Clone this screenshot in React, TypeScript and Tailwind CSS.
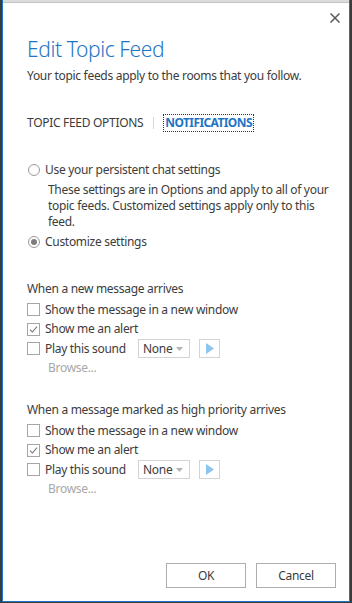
const font = { fontFamily: '"Noto Sans", "Open Sans", sans-serif' };

function Checkbox({ checked }: { checked?: boolean }) {
  return (
    <span className="flex h-[13px] w-[13px] shrink-0 items-center justify-center border border-[#a6a6a6] bg-white">
      {checked && (
        <svg width="9" height="9" viewBox="0 0 9 9" fill="none">
          <path d="M1 4.6L3.4 7L8 1.6" stroke="#7a7a7a" strokeWidth="1.1" />
        </svg>
      )}
    </span>
  );
}

function Radio({ checked }: { checked?: boolean }) {
  return (
    <span className="flex h-[12px] w-[12px] shrink-0 items-center justify-center rounded-full border border-[#9a9a9a] bg-white">
      {checked && <span className="h-[6px] w-[6px] rounded-full bg-[#7d7d7d]" />}
    </span>
  );
}

function Group({ title }: { title: string }) {
  return (
    <div className="flex flex-col">
      <div className="h-[16px] leading-[16px]">{title}</div>
      <div className="mt-[3px] flex h-[19px] items-center gap-[5px]">
        <Checkbox />
        <span>Show the message in a new window</span>
      </div>
      <div className="flex h-[20px] items-center gap-[5px]">
        <Checkbox checked />
        <span>Show me an alert</span>
      </div>
      <div className="flex h-[19px] items-center gap-[5px]">
        <Checkbox />
        <span className="w-[88px]">Play this sound</span>
        <div className="flex h-[19px] w-[52px] items-center justify-between border border-[#d4d4d4] pl-[4px] pr-[6px]">
          <span>None</span>
          <svg width="7" height="4" viewBox="0 0 7 4">
            <path d="M0 0H7L3.5 4Z" fill="#b3b3b3" />
          </svg>
        </div>
        <div className="ml-[4px] flex h-[19px] w-[21px] items-center justify-center border border-[#d4d4d4]">
          <svg width="8" height="11" viewBox="0 0 8 11">
            <path d="M0 0L8 5.5L0 11Z" fill="#8ec5ee" />
          </svg>
        </div>
      </div>
      <div className="flex h-[19px] items-center pl-[21px] text-[#a8a8a8]">Browse...</div>
    </div>
  );
}

export default function App() {
  return (
    <div className="h-[603px] w-[352px] bg-[#3b3b3b] text-[12px] tracking-[-0.3px] text-[#3c3c3c]" style={font}>
      <div className="ml-[2px] flex h-[602px] w-[348px] flex-col border-x border-b border-[#1b76c8] bg-white">
        {/* window chrome strip */}
        <div className="h-[3px] border-b border-[#c4c4c4] bg-[#dcdcdc]" />

        {/* close */}
        <div className="flex h-[31px] justify-end pr-[9px] pt-[10px]">
          <svg width="10" height="10" viewBox="0 0 10 10">
            <path d="M0.5 0.5L9.5 9.5M9.5 0.5L0.5 9.5" stroke="#5a5a5a" strokeWidth="1.5" />
          </svg>
        </div>

        <div className="flex flex-1 flex-col pl-[24px]">
          <h1 className="h-[30px] text-[21px] font-light leading-[30px] tracking-[-0.4px] text-[#1e75c6]">Edit Topic Feed</h1>
          <p className="mt-[4px] h-[16px] leading-[16px]">Your topic feeds apply to the rooms that you follow.</p>

          {/* tabs */}
          <div className="mt-[31px] flex h-[16px] items-center leading-[16px]">
            <span>TOPIC FEED OPTIONS</span>
            <span className="ml-[10px] h-[12px] w-px bg-[#d6d6d6]" />
            <span className="ml-[9px] border border-dotted border-[#333] px-[1px] font-bold tracking-[-0.6px] text-[#1e75c6]">NOTIFICATIONS</span>
          </div>

          {/* persistent settings */}
          <div className="mt-[31px] flex h-[16px] items-center gap-[5px] pl-[1px]">
            <Radio />
            <span>Use your persistent chat settings</span>
          </div>
          <p className="mt-[4px] w-[304px] pl-[21px] leading-[16px]">
            These settings are in Options and apply to all of your topic feeds. Customized settings apply only to this feed.
          </p>
          <div className="mt-[4px] flex h-[16px] items-center gap-[5px] pl-[1px]">
            <Radio checked />
            <span>Customize settings</span>
          </div>

          <div className="mt-[31px]">
            <Group title="When a new message arrives" />
          </div>
          <div className="mt-[25px]">
            <Group title="When a message marked as high priority arrives" />
          </div>

          {/* buttons */}
          <div className="mt-auto flex justify-end gap-[10px] pb-[13px] pr-[13px]">
            <button className="h-[25px] w-[80px] border border-[#adadad] bg-white text-[#3c3c3c]">OK</button>
            <button className="h-[25px] w-[80px] border border-[#adadad] bg-white text-[#3c3c3c]">Cancel</button>
          </div>
        </div>
      </div>
    </div>
  );
}
